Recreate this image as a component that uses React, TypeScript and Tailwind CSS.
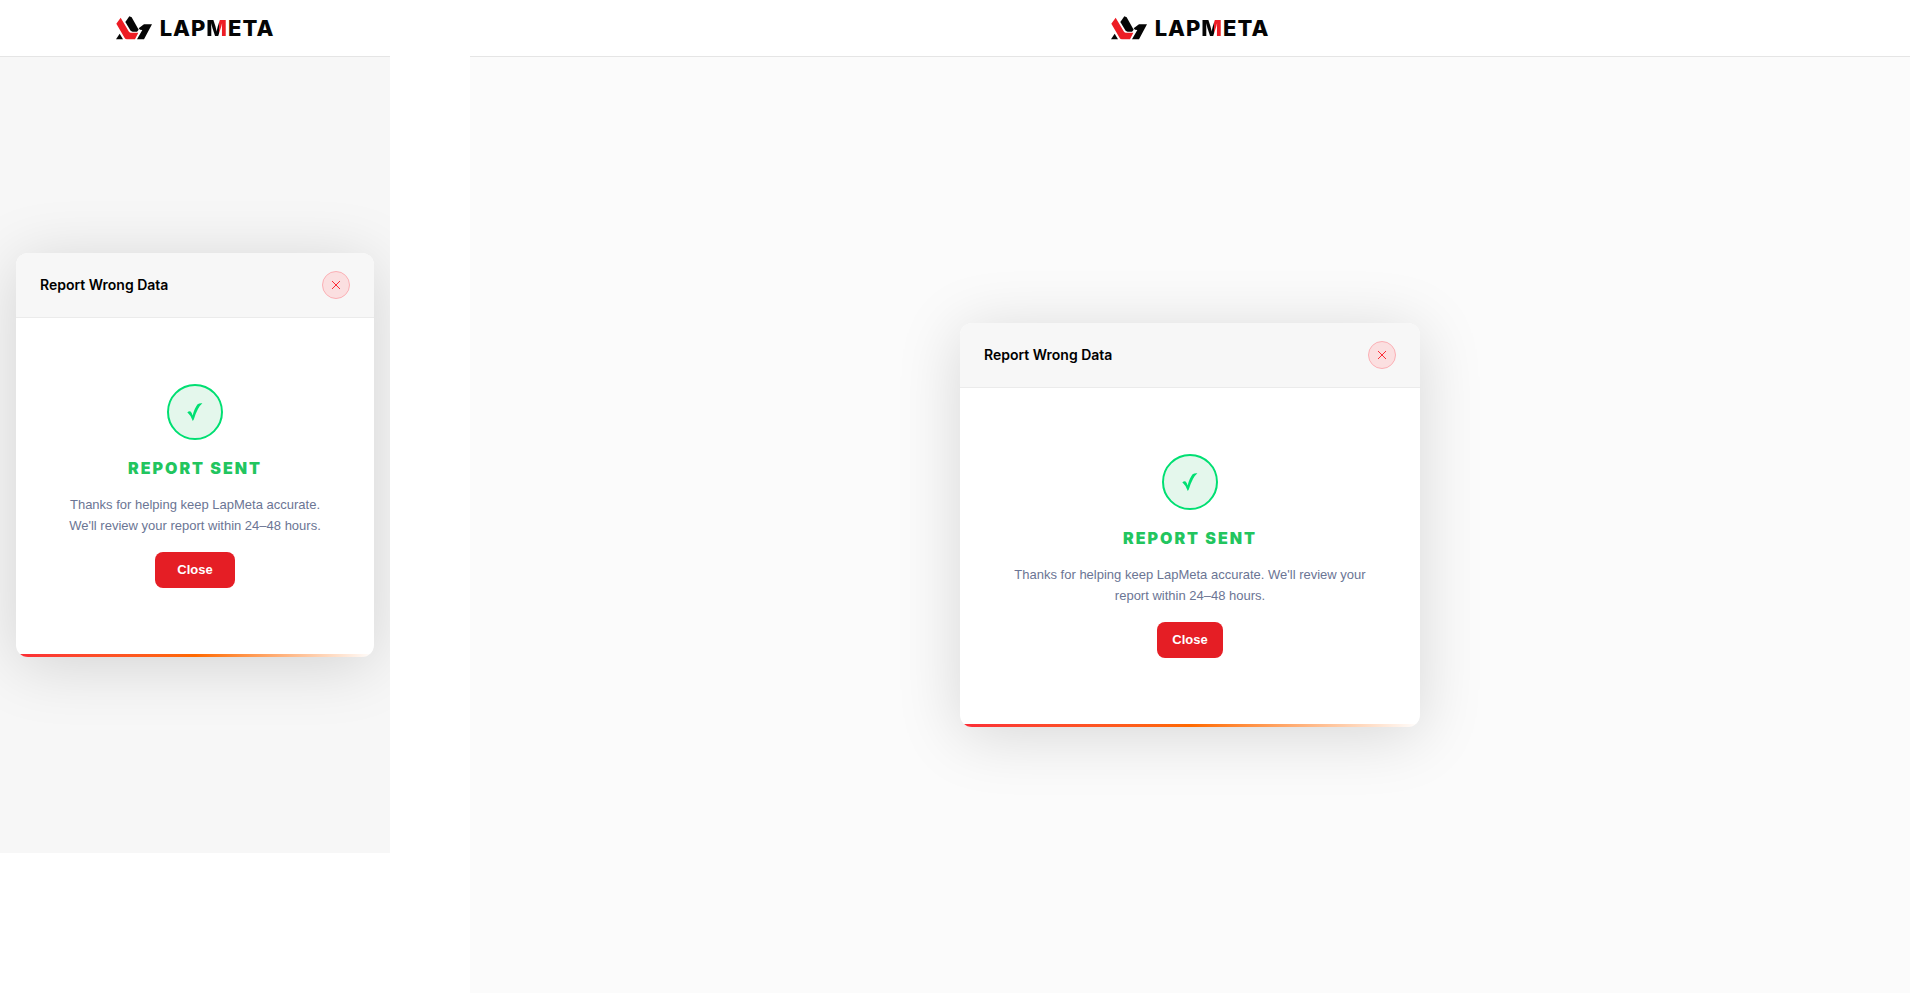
// Report Wrong Data: success state, shown at phone and desktop widths

import React from "react";

const Logo: React.FC = () => (
  <a href="#" aria-label="LapMeta home" className="flex items-center gap-2">
    <svg viewBox="0 0 108 70" className="h-6 w-9" aria-hidden="true">
      <path fill="#ed1c24" d="M14 4 L1 22 L26 65 Q28 69 33 69 L57 69 L67 49 L44 49 Q40 49 38 45 Z" />
      <path fill="#050505" d="M40 0 L28 17 L43 42 Q46 46 50 46 L63 46 L68 40 L47 3 Z" />
      <path fill="#050505" d="M108 24 L84 24 L68 36 L72 40 L79 41 L63 69 L84 69 Z" />
      <path fill="#050505" d="M11 52 L0 69 L21 69 Z" />
    </svg>
    <span className="font-['Inter'] text-[22px] leading-6 font-extrabold tracking-[1px] text-[#050505]">
      LAP
      <span className="bg-linear-to-r from-[#050505] from-60% to-[#ed1c24] to-60% bg-clip-text text-transparent">
        M
      </span>
      ETA
    </span>
  </a>
);

const CloseIcon: React.FC = () => (
  <svg viewBox="0 0 10 10" className="size-[10px]" fill="none" stroke="currentColor" strokeWidth="1" aria-hidden="true">
    <path d="M1 1 L9 9 M9 1 L1 9" />
  </svg>
);

const CheckIcon: React.FC = () => (
  <svg viewBox="0 0 16 18" className="h-[18px] w-4" fill="currentColor" aria-hidden="true">
    <path d="M0.3 9.2 Q2.2 7.9 3.6 8.5 Q4.8 9.6 5.6 12.4 Q7.6 5 10.6 1.3 Q12.4 0 15.4 0.3 Q10.6 4.2 6.9 16.2 L5.8 17.9 Q4 12.4 0.3 9.2 Z" />
  </svg>
);

interface ReportDialogProps {
  titleId: string;
  className: string;
  buttonClassName: string;
}

const ReportDialog: React.FC<ReportDialogProps> = ({ titleId, className, buttonClassName }) => (
  <section
    role="dialog"
    aria-labelledby={titleId}
    className={`w-full overflow-hidden rounded-xl bg-white shadow-[0_8px_64px_rgba(0,0,0,0.15)] ${className}`}
  >
    <div className="flex items-center justify-between border-b border-[#ebebeb] bg-[#f7f7f7] px-6 py-[18px]">
      <h2 id={titleId} className="font-['Inter'] text-sm font-semibold text-black">
        Report Wrong Data
      </h2>
      <button
        type="button"
        aria-label="Close dialog"
        className="flex size-7 items-center justify-center rounded-full border border-[#fbb0b5] bg-[#fbdfe0] text-[#fb2c36]"
      >
        <CloseIcon />
      </button>
    </div>
    <div className="flex flex-col items-center px-12 py-[66px] text-center">
      <div className="flex size-14 items-center justify-center rounded-full border-2 border-[#00df72] bg-[#e4f7ec] text-[#00df72]">
        <CheckIcon />
      </div>
      <h3 className="mt-4 font-['Inter'] text-base leading-6 font-black tracking-[2px] text-[#22c55e]">
        REPORT SENT
      </h3>
      <p className="mt-3.5 text-[13px] leading-[21px] text-[#6b7594]">
        Thanks for helping keep LapMeta accurate. We'll review your report within 24–48 hours.
      </p>
      <button
        type="button"
        className={`mt-4 h-9 rounded-lg bg-[#e51e25] text-[13px] font-bold text-white ${buttonClassName}`}
      >
        Close
      </button>
    </div>
    <div className="h-[3px] bg-linear-to-r from-[#fb2c36] via-[#ff6900] to-transparent" />
  </section>
);

const TopBar: React.FC = () => (
  <header className="flex h-[57px] items-center justify-center border-b border-[#e5e5e5] bg-white">
    <Logo />
  </header>
);

export default function App() {
  return (
    <div className="flex min-h-screen items-stretch gap-20 bg-white font-['Liberation_Sans',sans-serif]">
      <div className="flex h-[853px] w-[390px] shrink-0 flex-col overflow-hidden bg-[#f7f7f7]">
        <TopBar />
        <main className="flex flex-1 items-center px-4">
          <ReportDialog titleId="report-title-phone" className="max-w-md" buttonClassName="px-[22px]" />
        </main>
      </div>
      <div className="flex min-w-0 flex-1 flex-col bg-[#fbfbfb]">
        <TopBar />
        <main className="flex flex-1 items-center justify-center">
          <ReportDialog titleId="report-title-desktop" className="max-w-[460px]" buttonClassName="px-[15px]" />
        </main>
      </div>
    </div>
  );
}
